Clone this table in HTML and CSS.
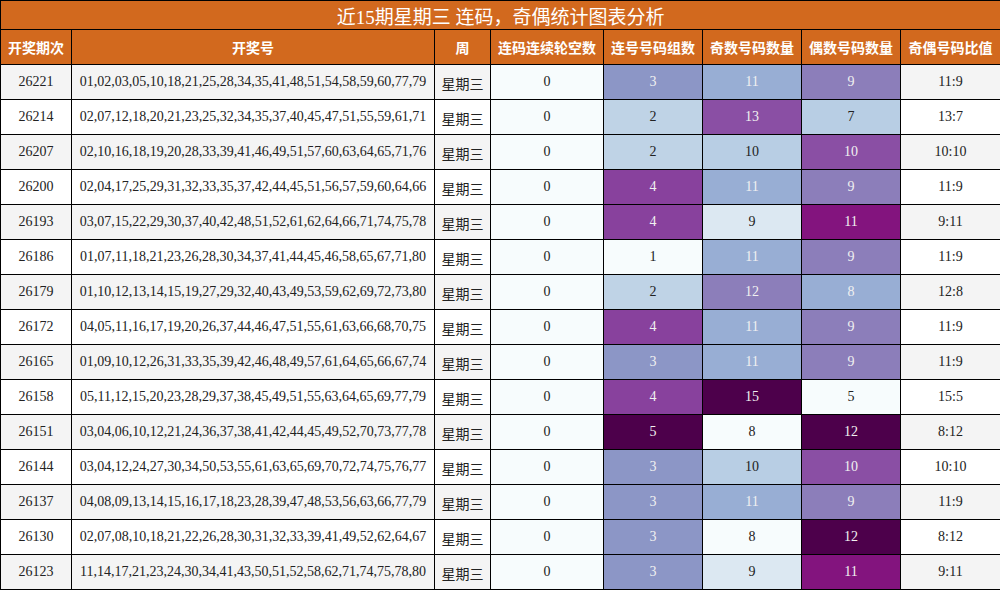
FILE: index.html
```html
<!DOCTYPE html>
<html lang="zh">
<head>
<meta charset="utf-8">
<title>近15期星期三 连码，奇偶统计图表分析</title>
<link rel="stylesheet" href="styles.css">
</head>
<body>
<table class="stats">
  <colgroup>
    <col class="c-issue"><col class="c-nums"><col class="c-week"><col class="c-gap">
    <col class="c-grp"><col class="c-odd"><col class="c-even"><col class="c-ratio">
  </colgroup>
  <thead>
    <tr class="title-row"><th colspan="8" class="title">近15期星期三 连码，奇偶统计图表分析</th></tr>
    <tr class="head-row">
      <th>开奖期次</th><th>开奖号</th><th>周</th><th>连码连续轮空数</th>
      <th>连号号码组数</th><th>奇数号码数量</th><th>偶数号码数量</th><th>奇偶号码比值</th>
    </tr>
  </thead>
  <tbody>
    <tr class="odd"><td>26221</td><td>01,02,03,05,10,18,21,25,28,34,35,41,48,51,54,58,59,60,77,79</td><td class="cjk">星期三</td><td class="h0">0</td><td class="g3 lt">3</td><td class="o11 lt">11</td><td class="e9 lt">9</td><td>11:9</td></tr>
    <tr><td>26214</td><td>02,07,12,18,20,21,23,25,32,34,35,37,40,45,47,51,55,59,61,71</td><td class="cjk">星期三</td><td class="h0">0</td><td class="g2">2</td><td class="o13 lt">13</td><td class="e7">7</td><td>13:7</td></tr>
    <tr class="odd"><td>26207</td><td>02,10,16,18,19,20,28,33,39,41,46,49,51,57,60,63,64,65,71,76</td><td class="cjk">星期三</td><td class="h0">0</td><td class="g2">2</td><td class="o10">10</td><td class="e10 lt">10</td><td>10:10</td></tr>
    <tr><td>26200</td><td>02,04,17,25,29,31,32,33,35,37,42,44,45,51,56,57,59,60,64,66</td><td class="cjk">星期三</td><td class="h0">0</td><td class="g4 lt">4</td><td class="o11 lt">11</td><td class="e9 lt">9</td><td>11:9</td></tr>
    <tr class="odd"><td>26193</td><td>03,07,15,22,29,30,37,40,42,48,51,52,61,62,64,66,71,74,75,78</td><td class="cjk">星期三</td><td class="h0">0</td><td class="g4 lt">4</td><td class="o9">9</td><td class="e11 lt">11</td><td>9:11</td></tr>
    <tr><td>26186</td><td>01,07,11,18,21,23,26,28,30,34,37,41,44,45,46,58,65,67,71,80</td><td class="cjk">星期三</td><td class="h0">0</td><td class="g1">1</td><td class="o11 lt">11</td><td class="e9 lt">9</td><td>11:9</td></tr>
    <tr class="odd"><td>26179</td><td>01,10,12,13,14,15,19,27,29,32,40,43,49,53,59,62,69,72,73,80</td><td class="cjk">星期三</td><td class="h0">0</td><td class="g2">2</td><td class="o12 lt">12</td><td class="e8 lt">8</td><td>12:8</td></tr>
    <tr><td>26172</td><td>04,05,11,16,17,19,20,26,37,44,46,47,51,55,61,63,66,68,70,75</td><td class="cjk">星期三</td><td class="h0">0</td><td class="g4 lt">4</td><td class="o11 lt">11</td><td class="e9 lt">9</td><td>11:9</td></tr>
    <tr class="odd"><td>26165</td><td>01,09,10,12,26,31,33,35,39,42,46,48,49,57,61,64,65,66,67,74</td><td class="cjk">星期三</td><td class="h0">0</td><td class="g3 lt">3</td><td class="o11 lt">11</td><td class="e9 lt">9</td><td>11:9</td></tr>
    <tr><td>26158</td><td>05,11,12,15,20,23,28,29,37,38,45,49,51,55,63,64,65,69,77,79</td><td class="cjk">星期三</td><td class="h0">0</td><td class="g4 lt">4</td><td class="o15 lt">15</td><td class="e5">5</td><td>15:5</td></tr>
    <tr class="odd"><td>26151</td><td>03,04,06,10,12,21,24,36,37,38,41,42,44,45,49,52,70,73,77,78</td><td class="cjk">星期三</td><td class="h0">0</td><td class="g5 lt">5</td><td class="o8">8</td><td class="e12 lt">12</td><td>8:12</td></tr>
    <tr><td>26144</td><td>03,04,12,24,27,30,34,50,53,55,61,63,65,69,70,72,74,75,76,77</td><td class="cjk">星期三</td><td class="h0">0</td><td class="g3 lt">3</td><td class="o10">10</td><td class="e10 lt">10</td><td>10:10</td></tr>
    <tr class="odd"><td>26137</td><td>04,08,09,13,14,15,16,17,18,23,28,39,47,48,53,56,63,66,77,79</td><td class="cjk">星期三</td><td class="h0">0</td><td class="g3 lt">3</td><td class="o11 lt">11</td><td class="e9 lt">9</td><td>11:9</td></tr>
    <tr><td>26130</td><td>02,07,08,10,18,21,22,26,28,30,31,32,33,39,41,49,52,62,64,67</td><td class="cjk">星期三</td><td class="h0">0</td><td class="g3 lt">3</td><td class="o8">8</td><td class="e12 lt">12</td><td>8:12</td></tr>
    <tr class="odd"><td>26123</td><td>11,14,17,21,23,24,30,34,41,43,50,51,52,58,62,71,74,75,78,80</td><td class="cjk">星期三</td><td class="h0">0</td><td class="g3 lt">3</td><td class="o9">9</td><td class="e11 lt">11</td><td>9:11</td></tr>
  </tbody>
</table>
</body>
</html>
```

FILE: styles.css
```css
html, body {
  margin: 0;
  padding: 0;
  background: #ffffff;
}

.stats {
  border-collapse: collapse;
  table-layout: fixed;
  width: 1000px;
  font-family: "Liberation Serif", "Noto Sans CJK SC", serif;
  font-size: 14px;
  color: #222222;
}

.c-issue { width: 71px; }
.c-nums { width: 363px; }
.c-week { width: 56px; }
.c-gap { width: 113px; }
.c-grp { width: 99px; }
.c-odd { width: 99px; }
.c-even { width: 99px; }
.c-ratio { width: 100px; }

.stats th,
.stats td {
  border: 1px solid #000000;
  padding: 0;
  text-align: center;
  vertical-align: middle;
  white-space: nowrap;
  overflow: hidden;
}

.title-row th.title {
  height: 28px;
  background: #d2691e;
  color: #ffffff;
  font-family: "Liberation Serif", "Noto Sans CJK SC", serif;
  font-weight: normal;
  font-size: 19px;
}

.head-row th {
  height: 34px;
  background: #d2691e;
  color: #ffffff;
  font-family: "Noto Sans CJK SC", sans-serif;
  font-weight: bold;
  font-size: 14px;
}

.stats tbody td {
  height: 34px;
  background: #ffffff;
}

.stats tbody tr.odd td {
  background: #f4f4f4;
}

.stats tbody tr td.cjk {
  font-family: "Noto Sans CJK SC", sans-serif;
  height: 32px;
  padding-top: 2px;
}

/* heatmap cells (BuPu scale) */
.stats tbody tr td.h0 { background: #f7fcfd; }

.stats tbody tr td.lt { color: #f1f1f1; }

.stats tbody tr td.g1 { background: #f7fcfd; }
.stats tbody tr td.g2 { background: #bfd3e6; }
.stats tbody tr td.g3 { background: #8c96c6; }
.stats tbody tr td.g4 { background: #88419d; }
.stats tbody tr td.g5 { background: #4d004b; }

.stats tbody tr td.o8 { background: #f7fcfd; }
.stats tbody tr td.o9 { background: #dce8f2; }
.stats tbody tr td.o10 { background: #b8cee4; }
.stats tbody tr td.o11 { background: #98aed4; }
.stats tbody tr td.o12 { background: #8c7eba; }
.stats tbody tr td.o13 { background: #8a4fa4; }
.stats tbody tr td.o15 { background: #4d004b; }

.stats tbody tr td.e5 { background: #f7fcfd; }
.stats tbody tr td.e7 { background: #b8cee4; }
.stats tbody tr td.e8 { background: #98aed4; }
.stats tbody tr td.e9 { background: #8c7eba; }
.stats tbody tr td.e10 { background: #8a4fa4; }
.stats tbody tr td.e11 { background: #83147e; }
.stats tbody tr td.e12 { background: #4d004b; }
```
